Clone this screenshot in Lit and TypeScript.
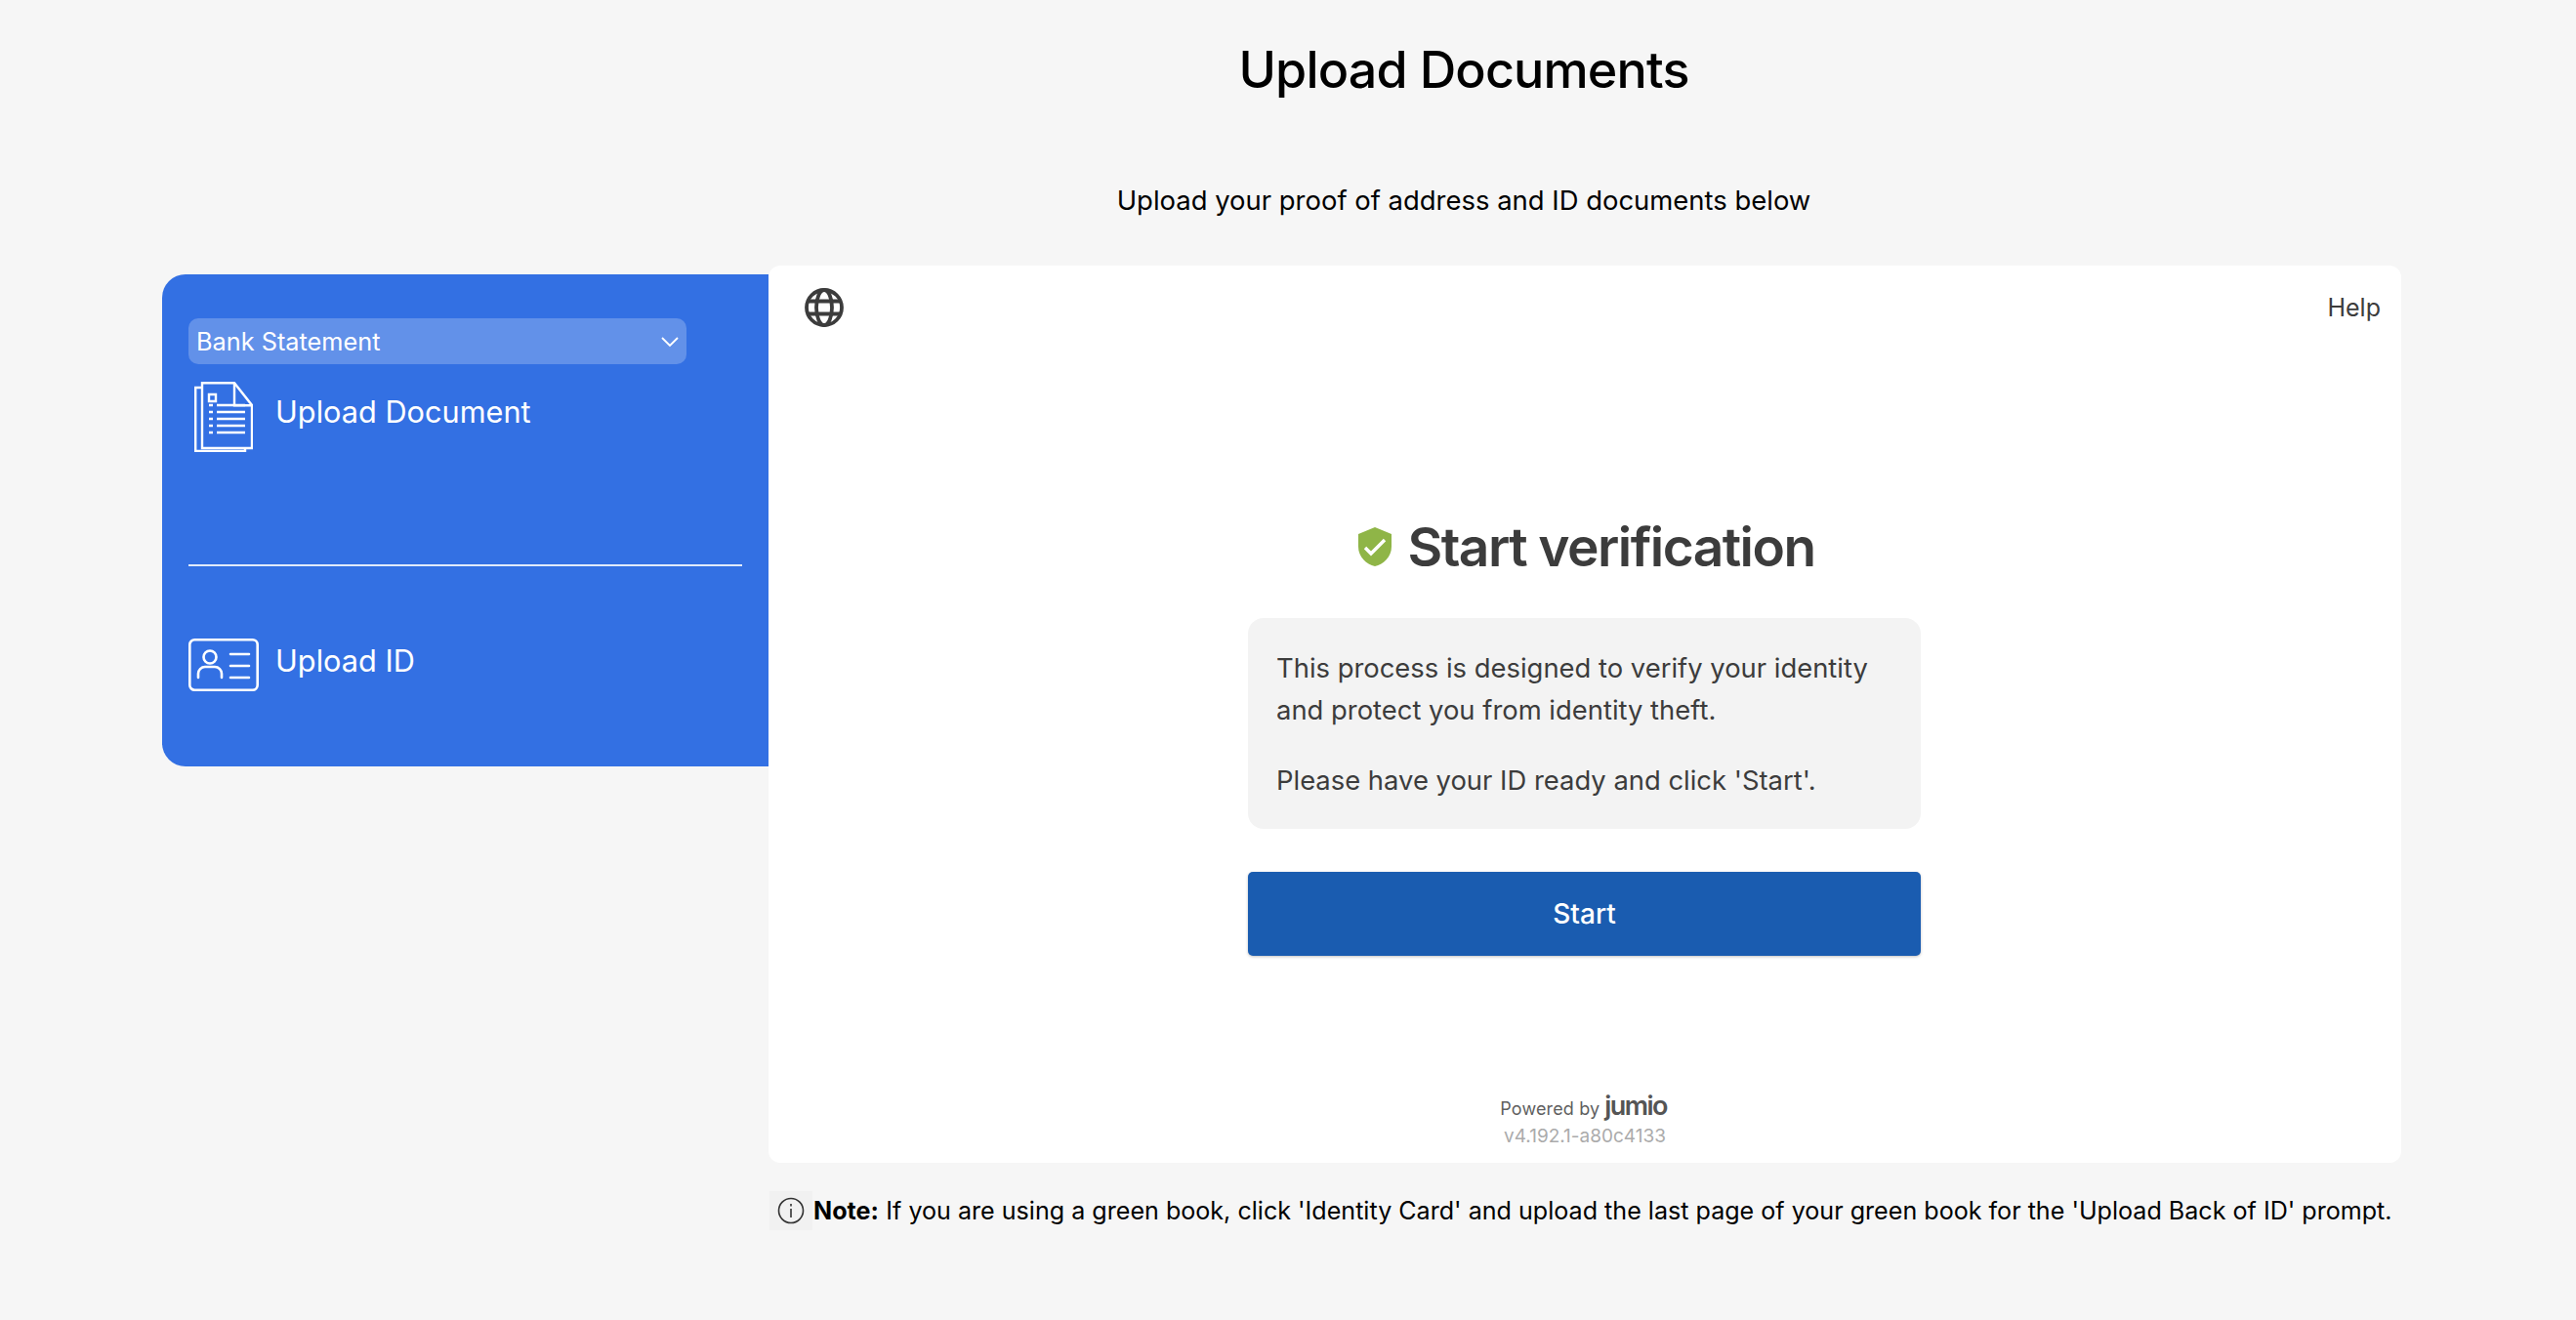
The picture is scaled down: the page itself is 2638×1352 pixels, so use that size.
import { LitElement, html, css } from "lit";
import { customElement } from "lit/decorators.js";

@customElement("app-root")
export class AppRoot extends LitElement {
  static styles = css`
    :host { display: block; min-height: 1352px; background: #f6f6f6; font-family: Inter, "Liberation Sans", sans-serif; color: #000; box-sizing: border-box; }
    * { box-sizing: border-box; }
    .head { padding-left: 360px; display: flex; flex-direction: column; align-items: center; }
    h1 { margin: 0; padding-top: 41px; font-size: 52px; line-height: 62px; font-weight: 500; letter-spacing: -.85px; }
    .sub { margin: 84px 0 0; font-size: 27.45px; line-height: 36px; font-weight: 400; }
    .main { display: flex; align-items: flex-start; padding: 0 0 0 166px; margin-top: 49px; }
    .side { width: 621px; height: 504px; margin-top: 9px; background: #3370e3; color: #fff; border-radius: 24px 0 0 24px; padding: 45px 27px; display: flex; flex-direction: column; }
    .select { width: 510px; height: 47px; background: rgba(255,255,255,.23); border-radius: 10px; display: flex; align-items: center; justify-content: space-between; padding: 0 7px 0 8px; font-size: 25.3px; }
    .row { display: flex; gap: 18px; font-size: 30.7px; line-height: 40px; }
    .row.doc { margin-top: 18px; padding-left: 6px; height: 143px; }
    .row.doc svg { flex: none; }
    .row.doc span { margin: 11px 0 0 0; padding-left: 5px; }
    .rule { height: 2px; background: rgba(255,255,255,.85); width: 567px; margin: 44px 0 0; }
    .row.id { margin-top: 74px; }
    .row.id span { margin-top: 3px; margin-left: -1px; }
    .right { width: 1672px; display: flex; flex-direction: column; }
    .panel { background: #fff; border-radius: 12px; height: 919px; display: flex; flex-direction: column; padding: 21px 21px 13px 35px; color: #3c3c3c; }
    .top { display: flex; justify-content: space-between; align-items: center; height: 42px; font-size: 25px; padding-left: 2px; }
    .top svg { margin-top: 1px; }
    .top span { margin-top: 2px; }
    .center { flex: 1; display: flex; flex-direction: column; align-items: center; padding: 191px 15px 0 0; }
    h2 { margin: 0; display: flex; align-items: center; gap: 17px; font-size: 55px; line-height: 68px; font-weight: 600; letter-spacing: -1.55px; color: #3c3c3c; transform: translateX(2px); }
    .box { width: 689px; margin-top: 39px; background: #f3f3f3; border-radius: 16px; padding: 30px 29px 28px; font-size: 27.4px; line-height: 43px; color: #3c3c3c; }
    .box p { margin: 0; }
    .box p + p { margin-top: 29px; }
    .start { width: 689px; height: 86px; margin-top: 44px; background: #1a5cb0; color: #fff; border: 0; border-radius: 5px; font: 500 28px Inter, "Liberation Sans", sans-serif; box-shadow: 0 1px 3px rgba(0,0,0,.25); }
    .foot { text-align: center; font-size: 18px; line-height: 28px; padding-right: 17px; }
    .pow { display: flex; justify-content: center; align-items: baseline; gap: 5px; color: #5f5f5f; letter-spacing: .15px; }
    .jumio { font-size: 27px; font-weight: 600; letter-spacing: -1.6px; color: #555; line-height: 28px; }
    .ver { color: #ababab; font-size: 19px; padding-left: 3px; }
    .note { display: flex; align-items: center; margin-top: 29px; padding-left: 1px; font-size: 25.1px; line-height: 40px; white-space: nowrap; }
    .note b { font-weight: 700; margin-right: 7.5px; }
    .ic { width: 44px; height: 40px; background: #f1f1f1; display: flex; align-items: center; justify-content: center; margin-right: 1px; flex: none; }
  `;

  render() {
    return html`
      <div class="head">
        <h1>Upload Documents</h1>
        <p class="sub">Upload your proof of address and ID documents below</p>
      </div>
      <div class="main">
        <aside class="side">
          <div class="select">
            <span>Bank Statement</span>
            <svg width="20" height="12" viewBox="0 0 20 12" fill="none" stroke="#fff" stroke-width="1.8"><path d="M2 2l8 8 8-8"/></svg>
          </div>
          <div class="row doc">
            <svg width="60" height="72" viewBox="0 0 60 72" fill="none" stroke="#fff" stroke-width="2.4">
              <path d="M8 1.2h33L59 24v44H8z"/>
              <path d="M41 1.2v23h18"/>
              <path d="M8 6H1.2v65H52v-3"/>
              <path d="M15 13h7v7h-7z"/>
              <path d="M15 24h4M23 24h29M15 31h4M23 31h29M15 38h4M23 38h29M15 45h4M23 45h29M15 52h4M23 52h29" />
            </svg>
            <span>Upload Document</span>
          </div>
          <div class="rule"></div>
          <div class="row id">
            <svg width="72" height="54" viewBox="0 0 72 54" fill="none" stroke="#fff" stroke-width="2.6" stroke-linecap="round">
              <rect x="1.3" y="1.3" width="69.4" height="51.4" rx="5"/>
              <circle cx="22" cy="19" r="6.5"/>
              <path d="M10 40v-4a7 7 0 0 1 7-7h10a7 7 0 0 1 7 7v4"/>
              <path d="M43 16h19M43 28h19M43 40h19"/>
            </svg>
            <span>Upload ID</span>
          </div>
        </aside>
        <div class="right">
          <section class="panel">
            <div class="top">
              <svg width="40" height="40" viewBox="0 0 40 40" fill="none" stroke="#3c3c3c" stroke-width="3.8">
                <circle cx="20" cy="20" r="18"/>
                <ellipse cx="20" cy="20" rx="8" ry="18"/>
                <path d="M4 13.5h32M4 26.5h32"/>
              </svg>
              <span>Help</span>
            </div>
            <div class="center">
              <h2>
                <svg width="34" height="40" viewBox="0 0 34 40"><path d="M17 0l17 7v13c0 10-8 18-17 20C8 38 0 30 0 20V7z" fill="#8fb547"/><path d="M7 21l6 6L27 13" fill="none" stroke="#fff" stroke-width="3.4"/></svg>
                Start verification
              </h2>
              <div class="box">
                <p>This process is designed to verify your identity and protect you from identity theft.</p>
                <p>Please have your ID ready and click 'Start'.</p>
              </div>
              <button class="start">Start</button>
            </div>
            <div class="foot">
              <div class="pow"><span>Powered by</span><span class="jumio">jumio</span></div>
              <div class="ver">v4.192.1-a80c4133</div>
            </div>
          </section>
          <div class="note">
            <span class="ic"><svg width="28" height="28" viewBox="0 0 28 28" fill="none" stroke="#333" stroke-width="1.6"><circle cx="14" cy="14" r="12.5"/><path d="M14 12v9M14 7v2.4"/></svg></span>
            <b>Note:</b><span>If you are using a green book, click 'Identity Card' and upload the last page of your green book for the 'Upload Back of ID' prompt.</span>
          </div>
        </div>
      </div>
    `;
  }
}
